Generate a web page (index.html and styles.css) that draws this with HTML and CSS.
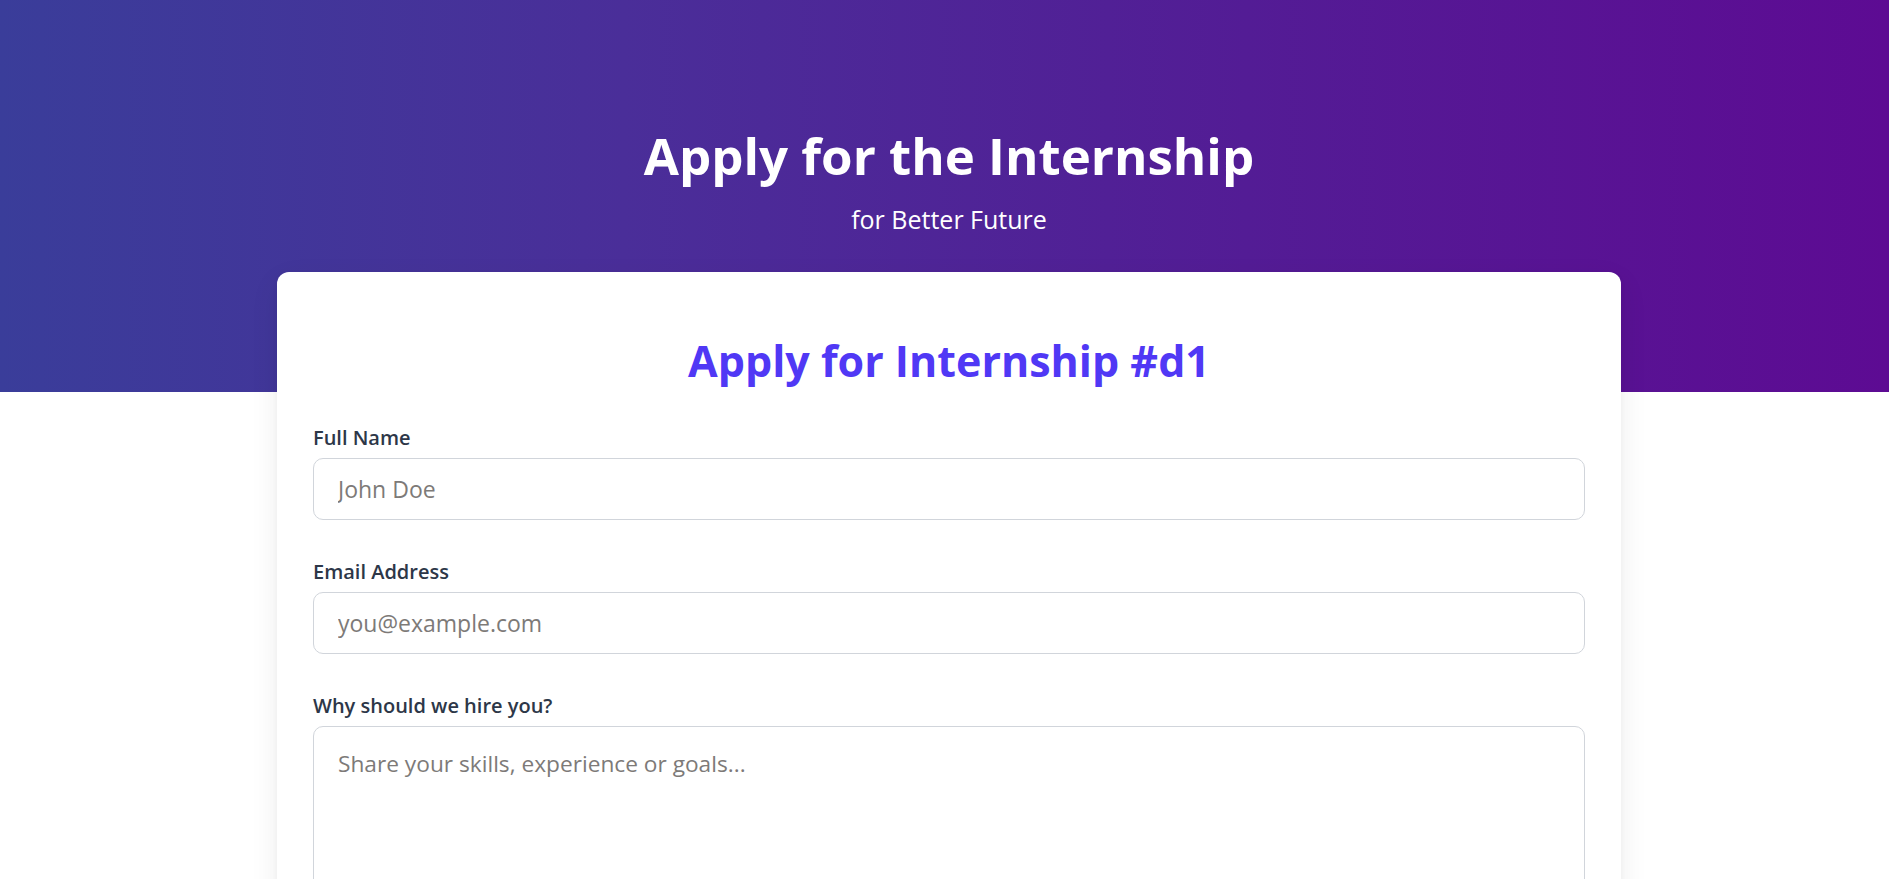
FILE: index.html
```html
<!DOCTYPE html>
<html lang="en">
<head>
<meta charset="utf-8">
<title>Apply for the Internship</title>
<link rel="stylesheet" href="styles.css">
</head>
<body>
  <header class="hero">
    <div class="hero-inner">
      <h1 class="hero-title">Apply for the Internship</h1>
      <p class="hero-sub">for Better Future</p>
    </div>
  </header>
  <main class="page">
    <section class="card">
      <h2 class="card-title">Apply for Internship #d1</h2>
      <form class="form">
        <div class="field">
          <label class="label" for="name">Full Name</label>
          <input class="input" id="name" type="text" placeholder="John Doe">
        </div>
        <div class="field">
          <label class="label" for="email">Email Address</label>
          <input class="input" id="email" type="email" placeholder="you@example.com">
        </div>
        <div class="field">
          <label class="label" for="why">Why should we hire you?</label>
          <textarea class="input textarea" id="why" placeholder="Share your skills, experience or goals..."></textarea>
        </div>
      </form>
    </section>
  </main>
</body>
</html>
```

FILE: styles.css
```css
* { box-sizing: border-box; }

html, body {
  margin: 0;
  padding: 0;
  background: #ffffff;
  font-family: "Open Sans", "Noto Sans", "Liberation Sans", sans-serif;
  overflow: hidden;
}

.hero {
  height: 392px;
  background: linear-gradient(90deg, #3a3d9a 0%, #4a2e99 33%, #531c95 66%, #5d0b93 100%);
  padding: 123px 0 0 9px;
}

.hero-inner {
  text-align: center;
  color: #ffffff;
}

.hero-title {
  margin: 0;
  font-size: 51px;
  line-height: 64px;
  font-weight: 700;
}

.hero-sub {
  margin: 16px 0 0;
  font-size: 25px;
  line-height: 32px;
  font-weight: 400;
}

.page {
  padding-left: 9px;
  display: flex;
  justify-content: center;
}

.card {
  width: 1344px;
  margin-top: -120px;
  background: #ffffff;
  border-radius: 12px;
  box-shadow: 0 10px 30px rgba(0, 0, 0, 0.07), 0 2px 6px rgba(0, 0, 0, 0.04);
  padding: 61px 36px 40px;
}

.card-title {
  margin: 0;
  text-align: center;
  color: #5038f5;
  font-size: 43px;
  line-height: 56px;
  font-weight: 700;
}

.form {
  margin-top: 37px;
  display: flex;
  flex-direction: column;
  gap: 40px;
}

.field {
  display: flex;
  flex-direction: column;
  gap: 8px;
}

.label {
  font-size: 20px;
  line-height: 24px;
  font-weight: 600;
  color: #2d3748;
}

.input {
  width: 100%;
  height: 62px;
  border: 1px solid #d1d5db;
  border-radius: 10px;
  padding: 12px 24px;
  font-family: inherit;
  font-size: 23px;
  line-height: 36px;
  color: #333;
  background: #fff;
  outline: none;
}

.input::placeholder {
  color: #7d7a78;
  opacity: 1;
}

.textarea {
  height: 220px;
  padding-top: 19px;
  font-size: 22.7px;
  resize: vertical;
  display: block;
}
```
